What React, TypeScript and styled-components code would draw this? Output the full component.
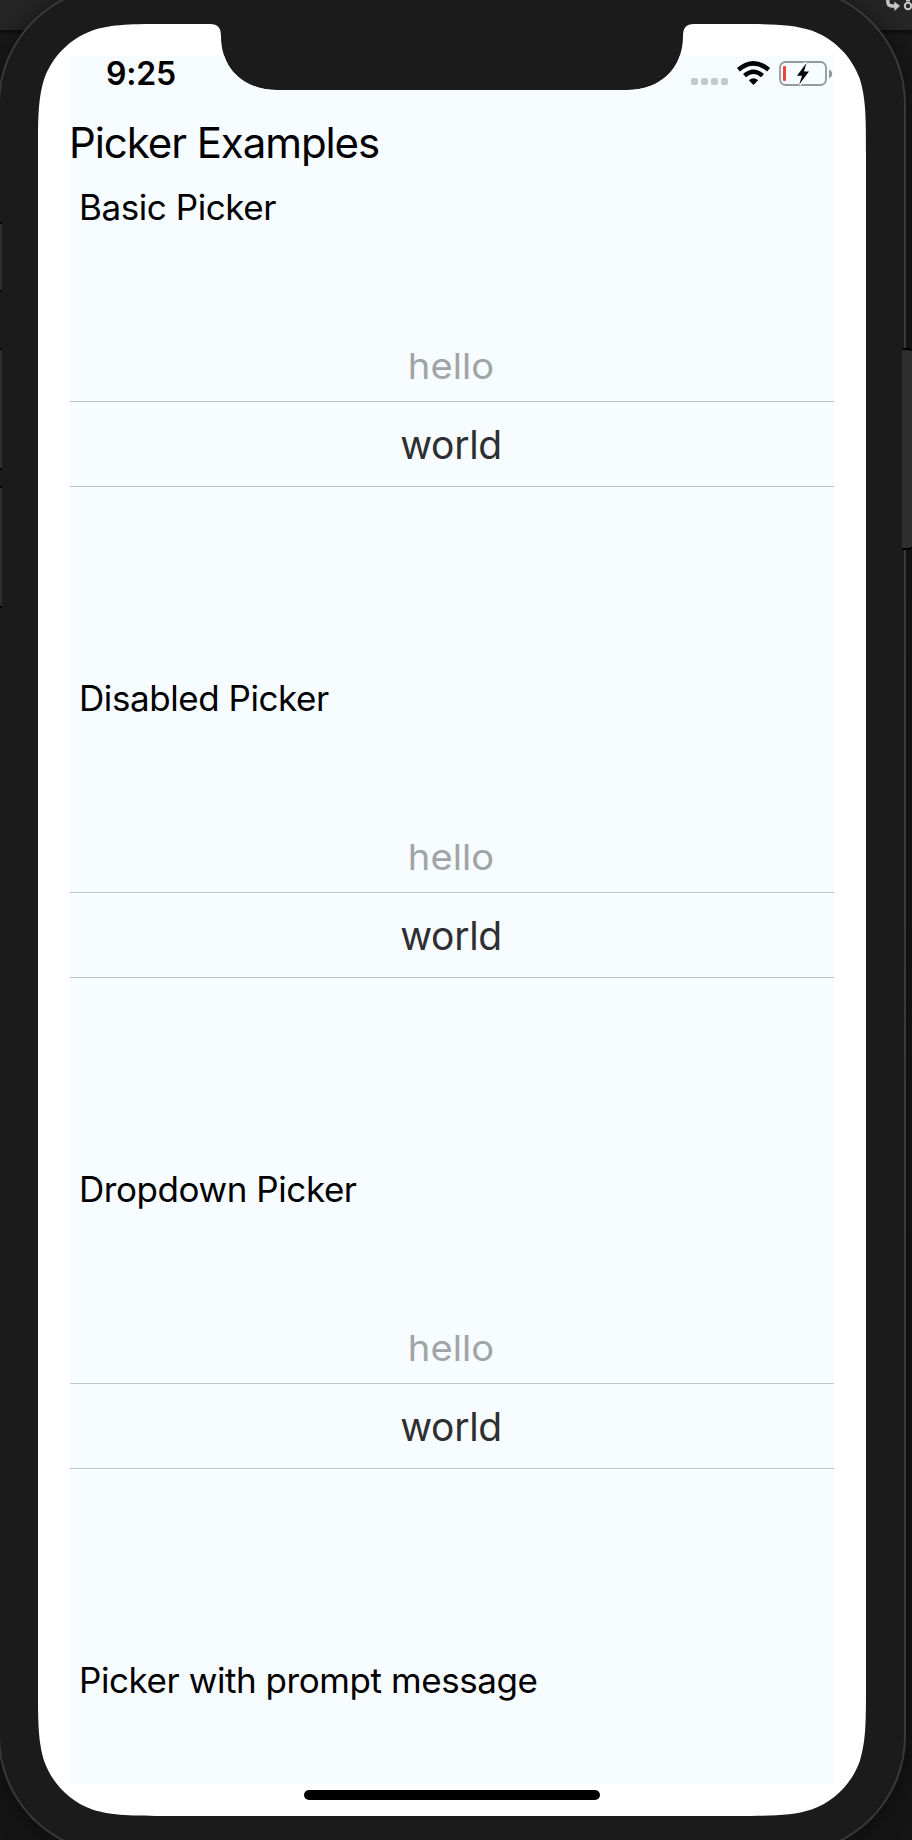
import React from 'react';
import styled, { createGlobalStyle } from 'styled-components';

const GlobalStyle = createGlobalStyle`
  * { box-sizing: border-box; }
  html, body { margin: 0; padding: 0; background: #161616; }
  body { overflow: hidden; }
`;

const Desktop = styled.main`
  position: relative;
  width: 912px;
  height: 1840px;
  overflow: hidden;
  background: linear-gradient(#262626 0 30px, #0c0c0c 30px, #191919 36px, #151515 100%);
  font-family: Inter, 'Liberation Sans', sans-serif;
  color: #000;
`;

const EditorText = styled.svg`
  position: absolute;
  top: 0;
  right: 0;
`;

const Phone = styled.div`
  position: relative;
  width: 908px;
  height: 1868px;
  margin: -14px 0 0 -2px;
  padding: 38px 40px;
  border-radius: 118px;
  background: #1b1b1b;
  box-shadow: inset 0 0 0 2px #393939, 0 0 26px rgba(0, 0, 0, 0.5);
`;

const SideButton = styled.i<{ $top: number; $height: number; $right?: boolean }>`
  position: absolute;
  top: ${(p) => p.$top}px;
  ${(p) => (p.$right ? 'left: 902px; width: 11px; border-radius: 0 5px 5px 0;' : 'left: 0; width: 2px;')}
  height: ${(p) => p.$height}px;
  background: #2d2d2d;
  border: solid #000;
  border-width: 2px 0;
`;

const Screen = styled.div`
  width: 828px;
  height: 1792px;
  padding: 32px;
  background: #fff;
  clip-path: path('M0 131.5 C0 93.6 0 74.7 6.4 54.3 C14.5 32.1 32.1 14.5 54.3 6.4 C74.7 0 93.6 0 131.5 0 H172 C180 0 183 4 183 12 C183 44 205 66 239 66 H589 C623 66 645 44 645 12 C645 4 648 0 656 0 H696.5 C734.4 0 753.3 0 773.7 6.4 C795.9 14.5 813.5 32.1 821.6 54.3 C828 74.7 828 93.6 828 131.5 V1660.5 C828 1698.4 828 1717.3 821.6 1737.7 C813.5 1759.9 795.9 1777.5 773.7 1785.6 C753.3 1792 734.4 1792 696.5 1792 H131.5 C93.6 1792 74.7 1792 54.3 1785.6 C32.1 1777.5 14.5 1759.9 6.4 1737.7 C0 1717.3 0 1698.4 0 1660.5 Z');
`;

const Content = styled.section`
  height: 1728px;
  background: #f6fcff;
`;

const StatusBar = styled.header`
  display: flex;
  justify-content: space-between;
  height: 60px;
  padding-left: 36px;
`;

const Time = styled.time`
  font-size: 32px;
  line-height: 36px;
  font-weight: 600;
  letter-spacing: -0.2px;
`;

const Title = styled.h1`
  margin: 0 0 0 -1px;
  height: 56px;
  font-size: 42px;
  line-height: 54px;
  font-weight: 400;
  letter-spacing: -1.08px;
  white-space: nowrap;
`;

const PickerSection = styled.section`
  height: 491px;
`;

const Label = styled.h2`
  margin: 0;
  height: 72px;
  padding-left: 9px;
  font-size: 35px;
  line-height: 70px;
  font-weight: 400;
  letter-spacing: -0.43px;
  white-space: nowrap;
`;

const Wheel = styled.div`
  padding-top: 88px;
  text-align: center;
`;

const Previous = styled.div`
  height: 69px;
  padding-right: 2px;
  font-size: 36px;
  line-height: 69px;
  color: #a1a4a6;
  transform: scaleX(1.06);
`;

const Selected = styled.div`
  height: 86px;
  padding-right: 2px;
  border: solid #c0c4c7;
  border-width: 1px 0;
  font-size: 39px;
  line-height: 86px;
  letter-spacing: -0.3px;
  color: #2d2f30;
`;

const HomeIndicator = styled.div`
  width: 296px;
  height: 10px;
  margin: 6px auto 0;
  border-radius: 5px;
  background: #000;
`;

const StatusIcons = () => (
  <svg width="144" height="36" viewBox="0 0 144 36" fill="none">
    <g fill="#c4c9cc">
      {[1, 11, 21, 31].map((x) => (
        <rect key={x} x={x} y="22" width="7" height="7" rx="2" />
      ))}
    </g>
    <g transform="translate(47 5)">
      <path d="M16.5 24 L11.8 19.3 Q16.5 15.4 21.2 19.3 Z" fill="#000" />
      <path d="M7.5 14.7 Q16.5 6.7 25.5 14.7" stroke="#000" strokeWidth="4.4" />
      <path d="M1.4 8.8 Q16.5 -4.2 31.6 8.8" stroke="#000" strokeWidth="4.6" />
    </g>
    <rect x="90" y="6" width="46" height="23" rx="5.5" stroke="#95999b" strokeWidth="1.8" />
    <path d="M139 13.5 Q142.2 14.8 142.2 18 Q142.2 21 139 22.3 Z" fill="#95999b" />
    <rect x="93" y="10" width="3" height="15" rx="1" fill="#ed4639" />
    <path
      d="M116.4 7 L107 19.8 H112 L109.2 28.4 L119 15.6 H114 Z"
      stroke="#f6fcff"
      strokeWidth="4"
      fill="#000"
      paintOrder="stroke"
    />
  </svg>
);

const sections = ['Basic Picker', 'Disabled Picker', 'Dropdown Picker'];

export default function App() {
  return (
    <Desktop>
      <GlobalStyle />
      <EditorText width="30" height="14" viewBox="0 0 30 14" fill="none" stroke="#c8c8c8">
        <path d="M5.8 -2 V1.5 Q5.8 6 10 6 H13" strokeWidth="3.4" />
        <path d="M12.3 1.4 L18 6 L12.3 11 Z" fill="#c8c8c8" stroke="none" />
        <circle cx="26" cy="6" r="3.2" strokeWidth="2" />
        <path d="M24 0.5 H28" strokeWidth="2" />
      </EditorText>
      <Phone>
        <Screen>
          <Content>
            <StatusBar>
              <Time>9:25</Time>
              <StatusIcons />
            </StatusBar>
            <Title>Picker Examples</Title>
            {sections.map((name) => (
              <PickerSection key={name}>
                <Label>{name}</Label>
                <Wheel>
                  <Previous>hello</Previous>
                  <Selected>world</Selected>
                </Wheel>
              </PickerSection>
            ))}
            <Label>Picker with prompt message</Label>
          </Content>
          <HomeIndicator />
        </Screen>
      </Phone>
      <SideButton $top={222} $height={70} />
      <SideButton $top={348} $height={122} />
      <SideButton $top={486} $height={122} />
      <SideButton $top={348} $height={202} $right />
    </Desktop>
  );
}
